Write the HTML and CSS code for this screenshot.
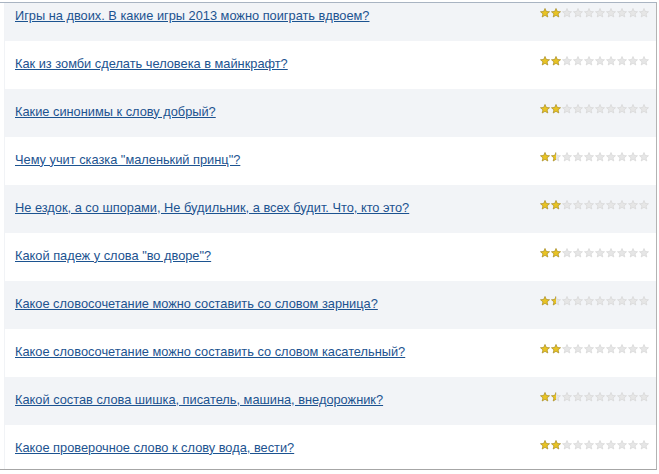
FILE: index.html
```html
<!DOCTYPE html>
<html lang="ru">
<head>
<meta charset="utf-8">
<title>Вопросы</title>
<link rel="stylesheet" href="styles.css">
</head>
<body>
<svg class="defs" width="0" height="0" aria-hidden="true">
  <defs>
    <path id="starshape" d="M5 0.5 L6.3 3.45 L9.5 3.75 L7.05 5.85 L7.8 9 L5 7.3 L2.2 9 L2.95 5.85 L0.5 3.75 L3.7 3.45 Z"/>
    <clipPath id="half"><rect x="0" y="0" width="5" height="10"/></clipPath>
  </defs>
</svg>
<div class="frame">
  <ul class="list">
    <li class="row odd"><a href="#">Игры на двоих. В какие игры 2013 можно поиграть вдвоем?</a><span class="stars" data-r="2"></span></li>
    <li class="row"><a href="#">Как из зомби сделать человека в майнкрафт?</a><span class="stars" data-r="2"></span></li>
    <li class="row odd"><a href="#">Какие синонимы к слову добрый?</a><span class="stars" data-r="2"></span></li>
    <li class="row"><a href="#">Чему учит сказка "маленький принц"?</a><span class="stars" data-r="1.5"></span></li>
    <li class="row odd"><a href="#">Не ездок, а со шпорами, Не будильник, а всех будит. Что, кто это?</a><span class="stars" data-r="2"></span></li>
    <li class="row"><a href="#">Какой падеж у слова "во дворе"?</a><span class="stars" data-r="2"></span></li>
    <li class="row odd"><a href="#">Какое словосочетание можно составить со словом зарница?</a><span class="stars" data-r="1.5"></span></li>
    <li class="row"><a href="#">Какое словосочетание можно составить со словом касательный?</a><span class="stars" data-r="2"></span></li>
    <li class="row odd"><a href="#">Какой состав слова шишка, писатель, машина, внедорожник?</a><span class="stars" data-r="1.5"></span></li>
    <li class="row"><a href="#">Какое проверочное слово к слову вода, вести?</a><span class="stars" data-r="2"></span></li>
  </ul>
</div>
<script src="stars.js"></script>
</body>
</html>
```

FILE: stars.js
```js
(function () {
  var NS = 'http://www.w3.org/2000/svg';
  var els = document.querySelectorAll('.stars');
  els.forEach(function (el) {
    var r = parseFloat(el.getAttribute('data-r'));
    for (var i = 0; i < 10; i++) {
      var svg = document.createElementNS(NS, 'svg');
      svg.setAttribute('viewBox', '0 0 10 10');
      svg.setAttribute('width', '10');
      svg.setAttribute('height', '10');
      svg.setAttribute('class', 'star');
      var empty = document.createElementNS(NS, 'use');
      empty.setAttribute('href', '#starshape');
      empty.setAttribute('class', 'empty');
      svg.appendChild(empty);
      if (i + 1 <= r) {
        var f = document.createElementNS(NS, 'use');
        f.setAttribute('href', '#starshape');
        f.setAttribute('class', 'full');
        svg.appendChild(f);
      } else if (i < r) {
        var h = document.createElementNS(NS, 'use');
        h.setAttribute('href', '#starshape');
        h.setAttribute('class', 'full');
        h.setAttribute('clip-path', 'url(#half)');
        svg.appendChild(h);
      }
      el.appendChild(svg);
    }
  });
})();
```

FILE: styles.css
```css
html, body {
  margin: 0;
  padding: 0;
  background: #ffffff;
}
body {
  font-family: "Liberation Sans", Arial, sans-serif;
  font-size: 12.8px;
  padding-top: 2px;
}
.defs {
  position: absolute;
  width: 0;
  height: 0;
  overflow: hidden;
}
.frame {
  width: 656px;
  height: 466px;
  border-top: 1px solid #a9b4c2;
  border-bottom: 1px solid #a6a6a6;
  border-right: 1px solid #b3b3b3;
  overflow: hidden;
  box-sizing: content-box;
}
.list {
  list-style: none;
  margin: -10px 0 0 0;
  padding: 0 0 0 4px;
}
.row {
  display: flex;
  align-items: center;
  justify-content: space-between;
  height: 48px;
  box-sizing: border-box;
  padding: 0 7px 4px 10px;
  background: #ffffff;
  border-left: 1px solid #f1f3f6;
}
.row.odd {
  background: #f2f4f7;
}
.row a {
  color: #1c5390;
  text-decoration: underline;
  white-space: nowrap;
}
.stars {
  display: flex;
  gap: 1px;
  margin-bottom: 4px;
}
.star {
  display: block;
  width: 10px;
  height: 10px;
}
.star .empty {
  fill: #e6e6e6;
  stroke: #d2d2d2;
  stroke-width: 0.6;
}
.star .full {
  fill: #e8c324;
  stroke: #a88a14;
  stroke-width: 0.6;
}
```
